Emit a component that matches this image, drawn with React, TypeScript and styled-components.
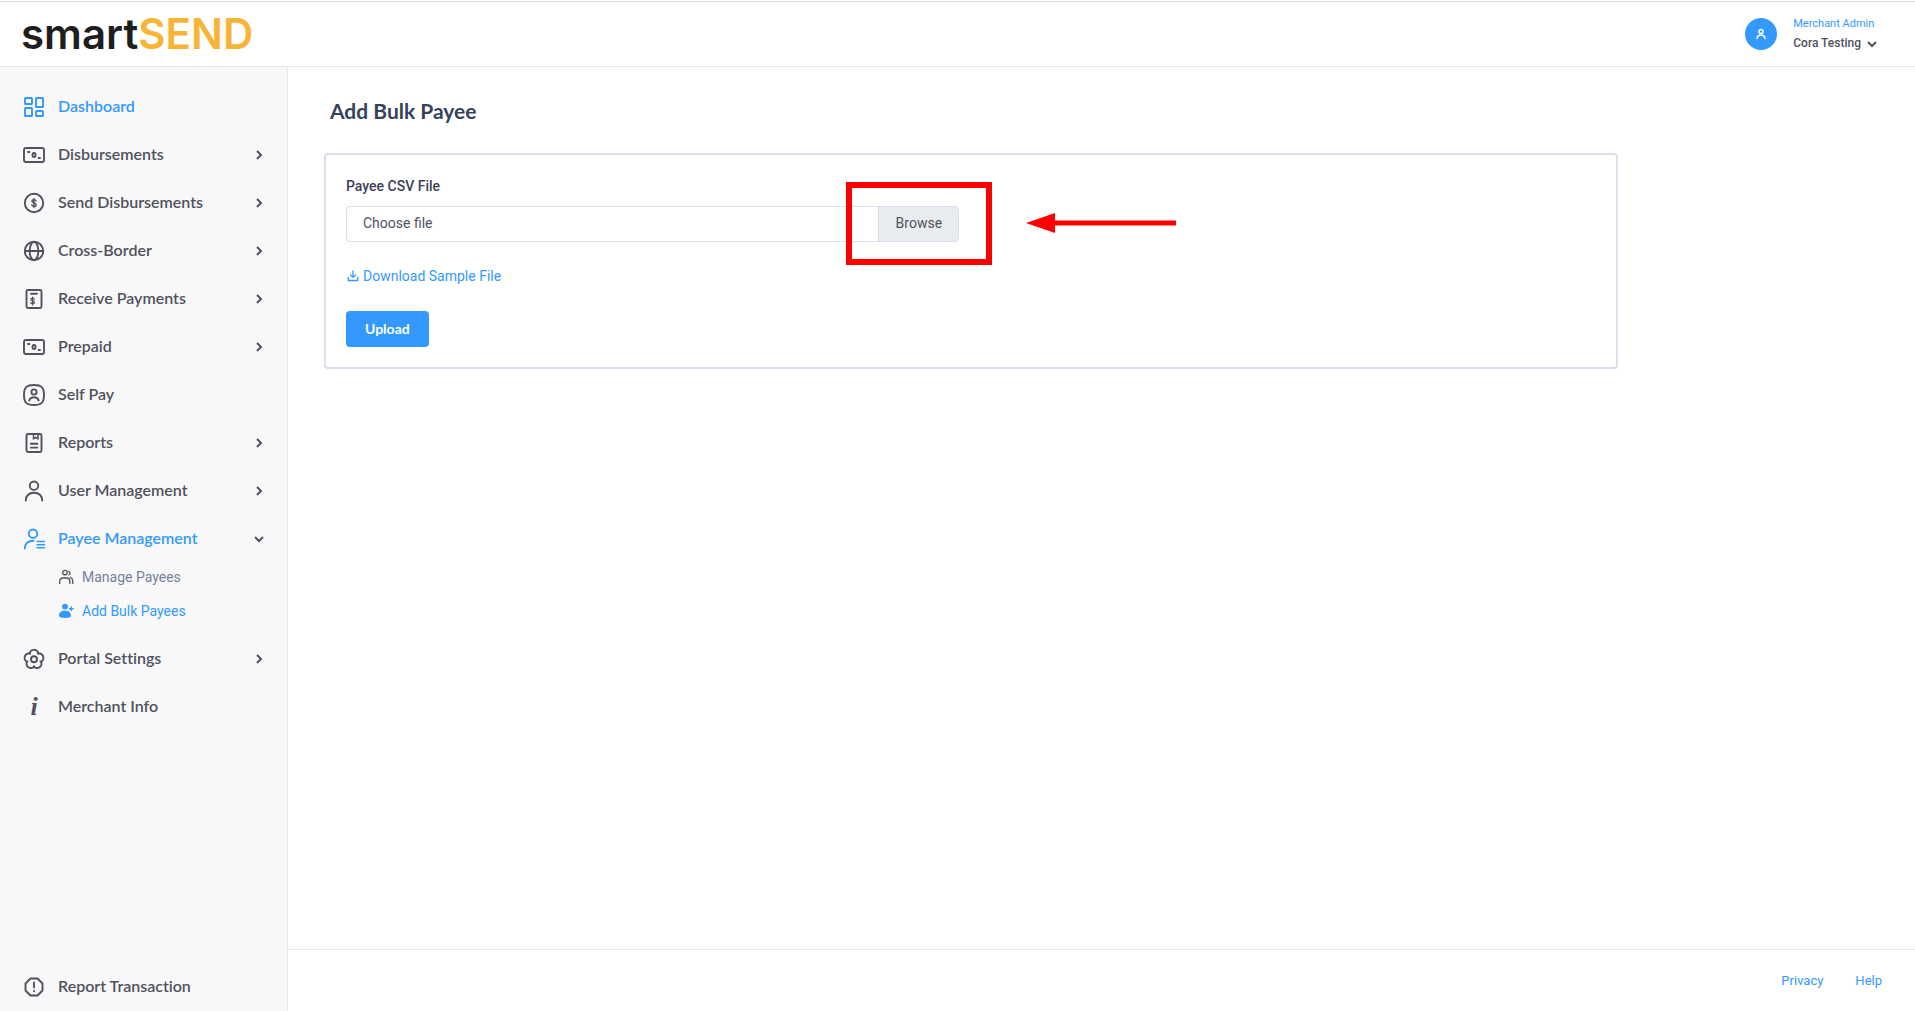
import React, { useState } from "react";
import styled, { createGlobalStyle } from "styled-components";

const color = {
  blue: "#3399ff",
  ink: "#50525f",
  heading: "#34435c",
  muted: "#74819c",
  line: "#e4e7f0",
  border: "#dadfeb",
  sidebar: "#f8f8f8",
  red: "#ff0000",
};

const GlobalStyle = createGlobalStyle`
  *, *::before, *::after { box-sizing: border-box; }
  body {
    margin: 0;
    background: #fff;
    color: ${color.ink};
    font-family: Roboto, "Liberation Sans", sans-serif;
    font-size: 14px;
    line-height: 21px;
  }
  a { color: inherit; text-decoration: none; }
  button { font: inherit; color: inherit; border: 0; background: none; padding: 0; cursor: pointer; }
`;

const Page = styled.div`
  display: flex;
  flex-direction: column;
  min-height: 100vh;
  padding-top: 1px;
`;

const Header = styled.header`
  display: flex;
  align-items: center;
  justify-content: space-between;
  height: 66px;
  padding: 0 37px 0 21px;
  border-top: 1px solid #d9dcde;
  border-bottom: 1px solid #e3e9f2;
`;

const Logo = styled.a`
  font-family: Inter, sans-serif;
  font-weight: 600;
  font-size: 42px;
  line-height: 60px;
  color: #f8b436;
`;

const LogoDark = styled.span`
  color: #1f1e1f;
`;

const Account = styled.button`
  display: flex;
  align-items: center;
  gap: 16px;
  text-align: left;
`;

const Avatar = styled.span`
  display: grid;
  place-items: center;
  width: 32px;
  height: 32px;
  border-radius: 50%;
  background: ${color.blue};
  color: #fff;
`;

const AccountText = styled.span`
  display: flex;
  flex-direction: column;
  padding-bottom: 1px;
`;

const Role = styled.span`
  font-size: 11px;
  line-height: 20px;
  color: ${color.blue};
`;

const UserName = styled.span`
  display: flex;
  align-items: center;
  gap: 5px;
  font-size: 12px;
  line-height: 19px;
  font-weight: 500;
`;

const Body = styled.div`
  display: flex;
  flex: 1;
`;

const Sidebar = styled.nav`
  display: flex;
  flex-direction: column;
  flex: none;
  width: 288px;
  padding-top: 16px;
  background: ${color.sidebar};
  border-right: 1px solid ${color.line};
`;

const NavItem = styled.a<{ $active?: boolean; $bottom?: boolean }>`
  display: flex;
  align-items: center;
  gap: 12px;
  height: 48px;
  margin-top: ${(p) => (p.$bottom ? "auto" : "0")};
  padding: 0 22px;
  font-family: Lato, sans-serif;
  font-size: 16px;
  font-weight: 600;
  font-variant-ligatures: none;
  color: ${(p) => (p.$active ? color.blue : color.ink)};
`;

const NavLabel = styled.span`
  flex: 1;
  padding-bottom: 3px;
`;

const Caret = styled.svg`
  flex: none;
  width: 12px;
  height: 12px;
  fill: none;
  stroke: ${color.ink};
  stroke-width: 2;
`;

const SubMenu = styled.div`
  display: flex;
  flex-direction: column;
  gap: 6px;
  padding-bottom: 10px;
`;

const SubItem = styled.a<{ $active?: boolean }>`
  display: flex;
  align-items: center;
  gap: 8px;
  height: 28px;
  padding-left: 58px;
  color: ${(p) => (p.$active ? color.blue : color.muted)};
`;

const Content = styled.div`
  display: flex;
  flex-direction: column;
  flex: 1;
  min-width: 0;
`;

const Main = styled.main`
  flex: 1;
  padding: 30px 38px 30px 36px;
`;

const Title = styled.h1`
  margin: 0 0 28px;
  padding-left: 6px;
  font-family: Lato, sans-serif;
  font-size: 21px;
  font-weight: 700;
  line-height: 28px;
  color: ${color.heading};
`;

const Card = styled.form`
  width: 83.333%;
  padding: 20px;
  border: 2px solid ${color.border};
  border-radius: 4px;
`;

const Columns = styled.div`
  display: grid;
  grid-template-columns: 1fr 1fr;
  gap: 24px;
`;

const Field = styled.div`
  display: flex;
  flex-direction: column;
  gap: 8px;
`;

const FieldLabel = styled.label`
  font-weight: 500;
  line-height: 23px;
  color: #3a4157;
`;

const FileBox = styled.label`
  display: flex;
  align-items: stretch;
  height: 36px;
  border: 1px solid ${color.border};
  border-radius: 4px;
  line-height: 32px;
  cursor: pointer;
`;

const FileName = styled.span`
  flex: 1;
  padding-left: 16px;
`;

const Browse = styled.span`
  position: relative;
  padding: 0 16px 0 17px;
  border-left: 1px solid ${color.border};
  border-radius: 0 3px 3px 0;
  background: #e9ecef;
`;

const HiddenFile = styled.input`
  position: absolute;
  width: 1px;
  height: 1px;
  opacity: 0;
`;

const Highlight = styled.span`
  position: absolute;
  inset: -25px -34px -24px -33px;
  border: 6px solid ${color.red};
  pointer-events: none;
`;

const Arrow = styled.svg`
  position: absolute;
  left: 147px;
  top: 6px;
  width: 150px;
  height: 20px;
  fill: ${color.red};
  pointer-events: none;
`;

const Download = styled.a`
  display: flex;
  align-items: center;
  gap: 3px;
  width: fit-content;
  margin: 24px 0;
  color: ${color.blue};
`;

const Upload = styled.button`
  display: block;
  height: 36px;
  padding: 0 19px 2px;
  border-radius: 4px;
  background: ${color.blue};
  color: #fff;
  font-family: Lato, sans-serif;
  font-weight: 700;
`;

const Footer = styled.footer`
  display: flex;
  align-items: center;
  justify-content: flex-end;
  gap: 32px;
  height: 62px;
  padding: 0 33px;
  border-top: 1px solid ${color.line};
  font-size: 13px;
  color: ${color.blue};
`;

const Icon = styled.svg<{ $size?: number; $weight?: number }>`
  flex: none;
  width: ${(p) => p.$size ?? 24}px;
  height: ${(p) => p.$size ?? 24}px;
  overflow: visible;
  fill: none;
  stroke: currentColor;
  stroke-width: ${(p) => p.$weight ?? 1.9};
  stroke-linecap: round;
  stroke-linejoin: round;
`;

const InfoMark = styled.i`
  flex: none;
  width: 24px;
  font: italic 700 26px/32px "Liberation Serif", serif;
  text-align: center;
`;

const gearPath =
  Array.from({ length: 120 }, (_, i) => {
    const a = (i / 120) * Math.PI * 2;
    const r = 6.8 + 2.8 * Math.pow(Math.abs(Math.cos(2.5 * a)), 0.6);
    return `${i ? "L" : "M"}${(12 + r * Math.sin(a)).toFixed(2)} ${(12.4 - r * Math.cos(a)).toFixed(2)}`;
  }).join("") + "Z";

const icons: Record<string, React.ReactNode> = {
  dashboard: (
    <>
      <rect x="3" y="3" width="7" height="6" rx="0.6" />
      <rect x="14" y="3" width="7" height="9" rx="0.6" />
      <rect x="3" y="13" width="7" height="8" rx="0.6" />
      <rect x="14" y="16" width="7" height="5" rx="0.6" />
    </>
  ),
  banknote: (
    <>
      <rect x="2" y="5" width="20" height="14" rx="2" />
      <path d="M6 9h1.4M16.6 15H18" />
      <ellipse cx="12" cy="12" rx="1.5" ry="2" />
    </>
  ),
  dollar: (
    <>
      <circle cx="12" cy="12" r="9.2" />
      <path strokeWidth="1.4" d="M14 10c-.3-1-1-1.3-2-1.3-1.200 0-2 .5-2 1.500 0 2.200 4.200 1.200 4.200 3.500 0 1-.9 1.600-2.200 1.600s-2-.5-2.300-1.500M12 7.500v9" />
    </>
  ),
  globe: (
    <>
      <circle cx="12" cy="12" r="9.2" />
      <ellipse cx="12" cy="12" rx="4.300" ry="9.2" />
      <path d="M3 12h18" />
    </>
  ),
  invoice: (
    <>
      <rect x="4.500" y="3" width="15" height="18" rx="1.5" />
      <path d="M9 6.800h6" />
      <path strokeWidth="1.200" d="M12.200 12.300c-.2-.8-.8-1.100-1.600-1.100-1 0-1.700.5-1.700 1.300 0 1.800 3.500 1 3.500 2.900 0 .9-.8 1.400-1.800 1.400s-1.700-.4-1.900-1.300M10.600 10v8" />
    </>
  ),
  self: (
    <>
      <path d="M12 2c7.500 0 10 2.500 10 10s-2.500 10-10 10S2 19.500 2 12 4.500 2 12 2Z" />
      <circle cx="12" cy="9" r="2.600" />
      <path d="M7.300 17.500c.6-2.300 2.300-3.300 4.700-3.300s4.100 1 4.700 3.300" />
    </>
  ),
  report: (
    <>
      <rect x="4.500" y="3" width="15" height="18" rx="1.5" />
      <path strokeWidth="1.500" d="M11.500 3v5l2.200-1.700L16 8V3" />
      <path d="M8.800 12.800h6.600M8.800 16.600h6.600" />
    </>
  ),
  user: (
    <>
      <circle cx="12" cy="6.700" r="4.200" />
      <path d="M3.800 21.500c.3-5.200 3.700-7.700 8.200-7.700s7.900 2.500 8.200 7.700" />
    </>
  ),
  payee: (
    <>
      <circle cx="11" cy="6.700" r="4.200" />
      <path d="M2.800 21.500c.3-4.800 3.600-7.700 8.700-7.700" />
      <path strokeWidth="1.400" strokeLinecap="butt" d="M14.500 14.500H23M14.500 17.700H23M14.500 20.800H23" />
    </>
  ),
  gear: (
    <>
      <path d={gearPath} />
      <circle cx="12" cy="12.200" r="3" />
    </>
  ),
  alert: (
    <>
      <path d="M8.500 3.500h7l5 5v7l-5 5h-7l-5-5v-7Z" />
      <path d="M12 7.500v5M12 16v.3" />
    </>
  ),
};

const Chevron = ({ down }: { down?: boolean }) => (
  <Caret viewBox="0 0 12 12" aria-hidden="true">
    <path d={down ? "M2 4l4 4 4-4" : "M4 2l4 4-4 4"} />
  </Caret>
);

type Entry = { icon: string; label: string; caret?: "right" | "down"; active?: boolean; sub?: boolean };

const entries: Entry[] = [
  { icon: "dashboard", label: "Dashboard", active: true },
  { icon: "banknote", label: "Disbursements", caret: "right" },
  { icon: "dollar", label: "Send Disbursements", caret: "right" },
  { icon: "globe", label: "Cross-Border", caret: "right" },
  { icon: "invoice", label: "Receive Payments", caret: "right" },
  { icon: "banknote", label: "Prepaid", caret: "right" },
  { icon: "self", label: "Self Pay" },
  { icon: "report", label: "Reports", caret: "right" },
  { icon: "user", label: "User Management", caret: "right" },
  { icon: "payee", label: "Payee Management", caret: "down", active: true, sub: true },
  { icon: "gear", label: "Portal Settings", caret: "right" },
  { icon: "info", label: "Merchant Info" },
];

const NavIcon = ({ name }: { name: string }) =>
  name === "info" ? (
    <InfoMark aria-hidden="true">i</InfoMark>
  ) : (
    <Icon viewBox="0 0 24 24" aria-hidden="true">{icons[name]}</Icon>
  );

const PayeeSubMenu = () => (
  <SubMenu>
    <SubItem href="#manage">
      <Icon $size={16} $weight={1.3} viewBox="0 0 16 16" color={color.ink} aria-hidden="true">
        <circle cx="7" cy="3.600" r="2.300" />
        <path d="M1.700 14.500v-2c0-2.300 1.500-3.500 3.500-3.500h3.200c2 0 3.500 1.200 3.500 3.500v2M10.800 2.300c1.700.6 1.700 3 .2 3.600M12.300 8.300c1.500.6 2.300 1.800 2.400 3.500l.1 2.700" />
      </Icon>
      Manage Payees
    </SubItem>
    <SubItem href="#bulk" $active>
      <Icon $size={16} $weight={1.4} viewBox="0 0 16 16" aria-hidden="true">
        <circle cx="7" cy="3.600" r="2.900" fill="currentColor" stroke="none" />
        <path d="M1 13c0-3.500 1.800-5.200 6-5.200s6 1.700 6 5.200c0 1.300-2.500 2-6 2s-6-.7-6-2Z" fill="currentColor" stroke="none" />
        <path d="M13.300 4v3.600M11.500 5.800h3.600" />
      </Icon>
      Add Bulk Payees
    </SubItem>
  </SubMenu>
);

export default function App() {
  const [file, setFile] = useState("Choose file");
  return (
    <Page>
      <GlobalStyle />
      <Header>
        <Logo href="#home"><LogoDark>smart</LogoDark>SEND</Logo>
        <Account type="button">
          <Avatar>
            <Icon $size={12} $weight={1.5} viewBox="0 0 12 12" aria-hidden="true">
              <circle cx="6" cy="3.500" r="2" />
              <path d="M2 10.500c.3-2.500 1.800-3.500 4-3.500s3.700 1 4 3.500" />
            </Icon>
          </Avatar>
          <AccountText>
            <Role>Merchant Admin</Role>
            <UserName>Cora Testing <Chevron down /></UserName>
          </AccountText>
        </Account>
      </Header>
      <Body>
        <Sidebar aria-label="Main">
          {entries.map((e) => (
            <React.Fragment key={e.label}>
              <NavItem href="#menu" $active={e.active}>
                <NavIcon name={e.icon} />
                <NavLabel>{e.label}</NavLabel>
                {e.caret && <Chevron down={e.caret === "down"} />}
              </NavItem>
              {e.sub && <PayeeSubMenu />}
            </React.Fragment>
          ))}
          <NavItem href="#report" $bottom>
            <NavIcon name="alert" />
            <NavLabel>Report Transaction</NavLabel>
          </NavItem>
        </Sidebar>
        <Content>
          <Main>
            <Title>Add Bulk Payee</Title>
            <Card onSubmit={(e) => e.preventDefault()}>
              <Columns>
                <Field>
                  <FieldLabel htmlFor="payee-file">Payee CSV File</FieldLabel>
                  <FileBox>
                    <FileName>{file}</FileName>
                    <Browse>
                      Browse
                      <HiddenFile
                        id="payee-file"
                        type="file"
                        accept=".csv"
                        onChange={(e) => setFile(e.target.files?.[0]?.name ?? "Choose file")}
                      />
                      <Highlight />
                      <Arrow viewBox="0 0 150 20" aria-hidden="true">
                        <path d="M0 10L29 0v7.500h121v5H29V20Z" />
                      </Arrow>
                    </Browse>
                  </FileBox>
                </Field>
              </Columns>
              <Download href="#sample">
                <Icon $size={14} $weight={1.3} viewBox="0 0 14 14" aria-hidden="true">
                  <path d="M7 1v6M4.500 5L7 7.400 9.500 5M2.200 7.500v3h9.600v-3" />
                </Icon>
                Download Sample File
              </Download>
              <Upload type="submit">Upload</Upload>
            </Card>
          </Main>
          <Footer>
            <a href="#privacy">Privacy</a>
            <a href="#help">Help</a>
          </Footer>
        </Content>
      </Body>
    </Page>
  );
}
